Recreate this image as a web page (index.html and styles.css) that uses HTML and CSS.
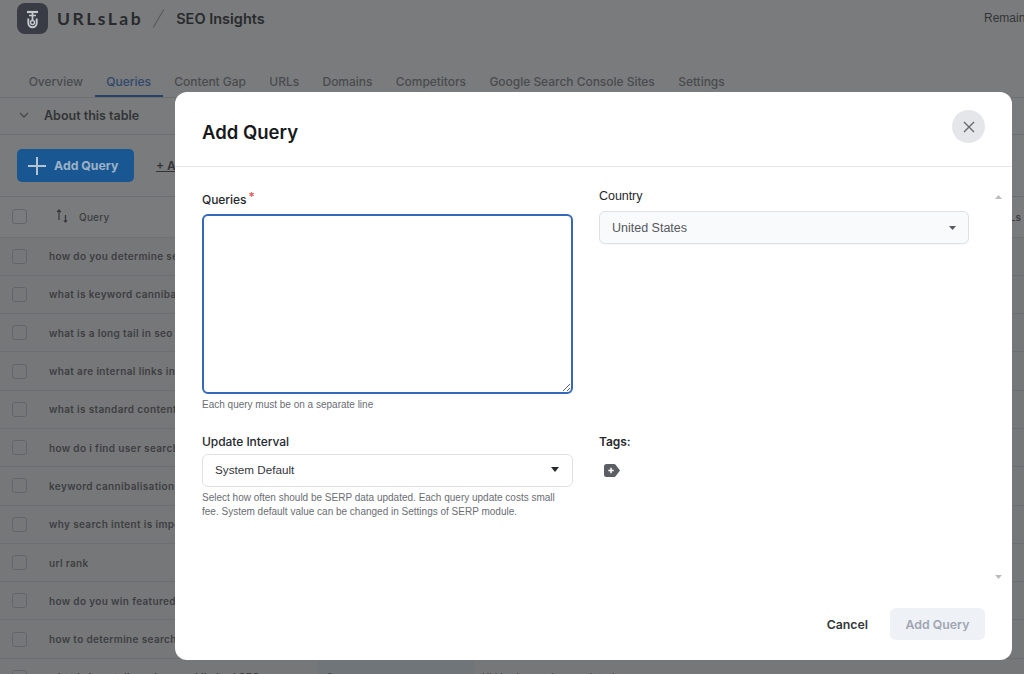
FILE: index.html
```html
<!DOCTYPE html>
<html lang="en">
<head>
<meta charset="utf-8">
<title>SEO Insights</title>
<link rel="stylesheet" href="styles.css">
</head>
<body>
<div class="page">
  <header class="topbar">
    <div class="brand">
      <span class="logo">
        <svg width="31" height="31" viewBox="0 0 31 31" fill="none" stroke="#c6c9ce"><path d="M10 9h11" stroke-width="2.200"/><path d="M12 12.500h7" stroke-width="1.500"/><path d="M15.500 10v8" stroke-width="1.800"/><circle cx="15.500" cy="19.500" r="2" stroke-width="1.400"/><path d="M11.300 15.500v4.500a4.200 4.200 0 0 0 8.400 0v-4.500" stroke-width="1.900"/></svg>
      </span>
      <span class="brand-name">URLsLab</span>
      <span class="slash"></span>
      <span class="brand-page">SEO Insights</span>
    </div>
    <span class="remain">Remaining credits</span>
  </header>
  <nav class="tabs">
    <span class="tab">Overview</span>
    <span class="tab active">Queries</span>
    <span class="tab">Content Gap</span>
    <span class="tab">URLs</span>
    <span class="tab">Domains</span>
    <span class="tab">Competitors</span>
    <span class="tab">Google Search Console Sites</span>
    <span class="tab">Settings</span>
  </nav>
  <div class="about">
    <svg width="10" height="6" viewBox="0 0 10 6" fill="none" stroke="#7d8085" stroke-width="1.300"><path d="M1 1l4 4 4-4"/></svg>
    <span>About this table</span>
  </div>
  <div class="toolbar">
    <span class="add-btn">
      <svg width="20" height="20" viewBox="0 0 20 20" stroke="#b5c2cf" stroke-width="2"><path d="M10 1v18M1 10h18"/></svg>
      Add Query
    </span>
    <span class="add-link">+ Add to list</span>
  </div>
  <div class="table">
    <div class="row head">
      <span class="check"></span>
      <span class="sort">
        <svg width="12" height="15" viewBox="0 0 12 15" fill="none" stroke="#5a5d62" stroke-width="1.200"><path d="M3 11V1M1 3.200L3 1l2 2.200"/><path d="M9.500 6v7" stroke-width="1.300"/><path d="M7.300 11.300h4.400L9.500 14z" fill="#5a5d62" stroke="none"/></svg>
      </span>
      <span class="q">Query</span>
      <span class="end">URLs</span>
    </div>
    <div class="row"><span class="check"></span><span class="q">how do you determine search intent</span></div>
    <div class="row"><span class="check"></span><span class="q">what is keyword cannibalization</span></div>
    <div class="row"><span class="check"></span><span class="q">what is a long tail in seo</span></div>
    <div class="row"><span class="check"></span><span class="q">what are internal links in seo</span></div>
    <div class="row"><span class="check"></span><span class="q">what is standard content</span></div>
    <div class="row"><span class="check"></span><span class="q">how do i find user search intent</span></div>
    <div class="row"><span class="check"></span><span class="q">keyword cannibalisation</span></div>
    <div class="row"><span class="check"></span><span class="q">why search intent is important</span></div>
    <div class="row"><span class="check"></span><span class="q">url rank</span></div>
    <div class="row"><span class="check"></span><span class="q">how do you win featured snippets</span></div>
    <div class="row"><span class="check"></span><span class="q">how to determine search intent</span></div>
    <div class="row last">
      <span class="check"></span>
      <span class="q">what is long tail seo keyword limited SEO</span>
      <span class="cell-blue">8</span>
      <span class="cell">Hidden keyword research tools</span>
    </div>
  </div>

  <div class="overlay"></div>

  <section class="modal">
    <div class="modal-head">
      <h2>Add Query</h2>
      <button class="close" type="button" aria-label="Close">
        <svg width="12" height="12" viewBox="0 0 12 12" stroke="#66696e" stroke-width="1.400"><path d="M1 1l10 10M11 1L1 11"/></svg>
      </button>
    </div>
    <div class="modal-body">
      <div class="form-grid">
        <div class="field field-queries">
          <label class="label">Queries<span class="req">*</span></label>
          <textarea class="area"></textarea>
          <p class="hint">Each query must be on a separate line</p>
        </div>
        <div class="field field-country">
          <label class="label">Country</label>
          <div class="select tinted">
            <span>United States</span>
            <svg width="7" height="4" viewBox="0 0 7 4"><path d="M0 0h7L3.500 4z" fill="#55585e"/></svg>
          </div>
        </div>
        <div class="field field-interval">
          <label class="label">Update Interval</label>
          <div class="select">
            <span>System Default</span>
            <svg width="8" height="5" viewBox="0 0 8 5"><path d="M0 0h8L4 5z" fill="#26292d"/></svg>
          </div>
          <p class="hint">Select how often should be SERP data updated. Each query update costs small fee. System default value can be changed in Settings of SERP module.</p>
        </div>
        <div class="field field-tags">
          <label class="label">Tags:</label>
          <span class="tag-add">
            <svg width="16" height="13" viewBox="0 0 16 13"><path d="M2.500 0H10c.6 0 1 .2 1.400.6L16 6.500l-4.600 5.900c-.4.400-.8.600-1.400.6H2.500A2.500 2.500 0 0 1 0 10.500v-8A2.500 2.500 0 0 1 2.500 0z" fill="#5b5e63"/><path d="M7 3.800v5.400M4.300 6.500h5.400" stroke="#fff" stroke-width="1.500"/></svg>
          </span>
        </div>
      </div>
      <div class="scroll">
        <svg width="7" height="4" viewBox="0 0 7 4"><path d="M0 4h7L3.500 0z" fill="#b9bcc1"/></svg>
        <svg width="7" height="4" viewBox="0 0 7 4"><path d="M0 0h7L3.500 4z" fill="#b9bcc1"/></svg>
      </div>
    </div>
    <div class="modal-foot">
      <button class="cancel" type="button">Cancel</button>
      <button class="submit" type="button">Add Query</button>
    </div>
  </section>
</div>
</body>
</html>
```

FILE: styles.css
```css
* { box-sizing: border-box; }
html, body { margin: 0; padding: 0; height: 100%; overflow: hidden; }
body { font-family: "Liberation Sans", Arial, sans-serif; background: #fff; color: #1c1e21; }

.page { position: relative; width: 1024px; height: 674px; overflow: hidden; background: #fff; }

.topbar { height: 71px; padding: 3px 0 0 17px; display: flex; justify-content: space-between; align-items: flex-start; white-space: nowrap; }
.brand { display: flex; align-items: center; height: 31px; }
.logo { position: relative; z-index: 1; width: 31px; height: 31px; border-radius: 8px; background: #393c44; display: block; }
.logo svg { display: block; }
.brand-name { margin-left: 9px; font-family: Lato, sans-serif; font-weight: 700; font-size: 17.500px; letter-spacing: 2.500px; color: #3c3f44; }
.slash { width: 1px; height: 21px; margin: 0 17px 0 15px; background: #a5a8ac; transform: rotate(30deg); }
.brand-page { font-family: Inter, sans-serif; font-weight: 600; font-size: 14.500px; color: #3c3f44; margin-top: -1px; }
.remain { margin-top: 8px; font-size: 12px; color: #55585c; width: 40px; }

.tabs { height: 27px; padding-left: 17px; display: flex; align-items: flex-start; border-bottom: 1px solid #dfe1e5; white-space: nowrap; }
.tab { height: 26px; padding: 3px 11.700px 0; font-family: Inter, sans-serif; font-weight: 500; font-size: 12px; line-height: 15px; color: #8a8e94; letter-spacing: -.03px; }
.tab.active { color: #4e86d8; border-bottom: 2px solid #3f78cc; }

.about { height: 37px; padding: 0 0 2px 19px; display: flex; align-items: center; gap: 15px; border-bottom: 1px solid #dfe1e5; font-family: Inter, sans-serif; font-weight: 600; font-size: 12.500px; color: #55585c; }

.toolbar { height: 62px; padding: 14px 0 0 17px; display: flex; align-items: flex-start; gap: 22px; border-bottom: 1px solid #dfe1e5; }
.add-btn { position: relative; z-index: 1; width: 117px; height: 33px; border-radius: 5px; background: #195792; color: #9db1c6; display: flex; align-items: center; gap: 7px; padding-left: 10px; font-family: Inter, sans-serif; font-weight: 700; font-size: 12.300px; }
.add-link { margin-top: 9px; font-family: Inter, sans-serif; font-weight: 600; font-size: 12px; color: #55585c; text-decoration: underline; white-space: nowrap; }

.row { height: 38.300px; position: relative; display: flex; align-items: center; padding-left: 12px; background: #f5f6f7; border-bottom: 1px solid #dfe1e5; color: #6e7074; white-space: nowrap; }
.row.head { height: 40.500px; background: #fff; border-bottom-color: #e4e6e9; }
.check { width: 15px; height: 15px; border-radius: 3px; border: 1px solid #c9ccd1; flex: none; }
.q { margin-left: 22px; font-family: Inter, "Liberation Sans", sans-serif; font-weight: 600; font-size: 10px; letter-spacing: .35px; }
.head .q { margin-left: 11px; font-weight: 500; letter-spacing: .2px; }
.sort { margin-left: 29px; height: 15px; }
.end { margin-left: auto; padding-right: 3px; font-family: Inter, sans-serif; font-weight: 600; font-size: 10px; }
.cell-blue { position: absolute; left: 318px; top: 0; width: 156px; height: 100%; padding-left: 9px; line-height: 38px; background: #e8f1fa; font-size: 10px; }
.cell { position: absolute; left: 482px; top: 0; line-height: 38px; font-size: 10px; }

.overlay { position: absolute; inset: 0; background: rgba(26, 27, 30, .58); }

.modal { position: absolute; z-index: 2; left: 175px; top: 92px; width: 837px; height: 568px; border-radius: 12px; background: #fff; display: flex; flex-direction: column; }
.modal-head { height: 75px; padding: 18px 27px 0; display: flex; justify-content: space-between; align-items: flex-start; border-bottom: 1px solid #e6e8ea; }
.modal-head h2 { margin: 10px 0 0; font-family: Inter, sans-serif; font-weight: 600; font-size: 18.500px; line-height: 24px; color: #17191c; }
.close { width: 33px; height: 33px; border: 0; border-radius: 50%; background: #e5e6ea; display: flex; align-items: center; justify-content: center; padding: 0; }

.modal-body { flex: 1; position: relative; padding: 25px 43px 0 27px; }
.form-grid { display: grid; grid-template-columns: 371px 370px; column-gap: 26px; grid-template-rows: 220px auto; row-gap: 22px; }
.field { min-width: 0; }
.label { display: block; height: 16px; margin-bottom: 4px; font-family: Inter, sans-serif; font-weight: 500; font-size: 12px; line-height: 16px; color: #26292d; letter-spacing: -.05px; }
.field-queries .label { height: 15px; margin-bottom: 7px; }
.field-country { margin-top: -4px; }
.field-country .label { height: 15px; margin-bottom: 8px; font-family: "Liberation Sans", sans-serif; font-weight: 400; font-size: 12.500px; }
.req { color: #d9534f; margin-left: 2px; position: relative; top: -3px; }
.area { display: block; width: 371px; height: 180px; margin: 0; border: 2px solid #3468b8; border-radius: 6px; outline: 0; background: #fff; resize: vertical; }
.hint { margin: 4px 0 0; font-size: 10px; line-height: 14px; color: #6a6d72; }
.select { height: 33px; padding: 0 13px 0 12px; border: 1px solid #dfe1e5; border-radius: 6px; background: #fff; display: flex; align-items: center; justify-content: space-between; font-size: 11.700px; color: #33363b; }
.field-interval .select { padding-bottom: 2px; }
.select.tinted { background: #f9fafb; color: #55585e; font-size: 12.500px; box-shadow: 0 1px 1px rgba(0, 0, 0, .04); padding-right: 12px; }
.field-tags .label { font-weight: 600; }
.tag-add { display: block; margin: 14px 0 0 5px; height: 13px; line-height: 0; }
.scroll { position: absolute; left: 820px; top: 28px; height: 384px; display: flex; flex-direction: column; justify-content: space-between; }
.scroll svg { display: block; }

.modal-foot { height: 67px; padding: 15px 27px 0 0; display: flex; justify-content: flex-end; align-items: flex-start; gap: 22px; }
.cancel, .submit { border: 0; font-family: Inter, sans-serif; font-weight: 600; font-size: 12.300px; padding: 0; }
.cancel { height: 32px; background: none; color: #33363b; }
.submit { width: 95px; height: 32px; border-radius: 6px; background: #eef1f6; color: #a0a6b1; }
```
